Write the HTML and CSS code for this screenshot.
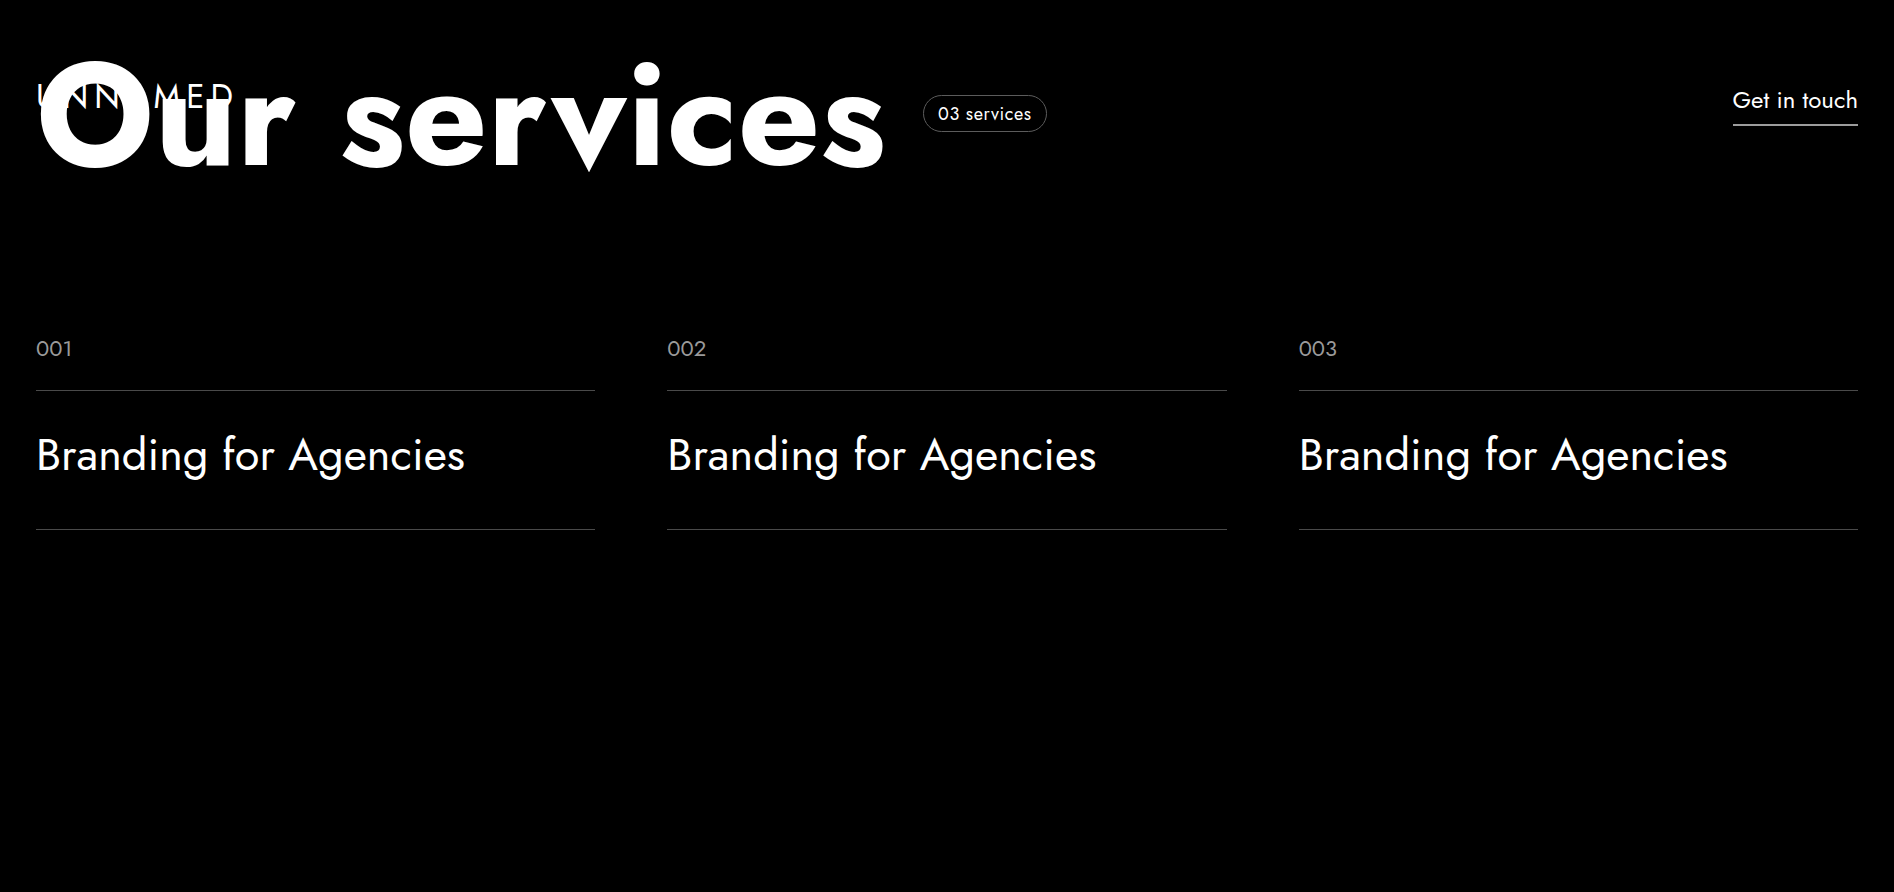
FILE: index.html
```html
<!DOCTYPE html>
<html lang="en">
<head>
<meta charset="utf-8">
<title>Our services</title>
<link rel="stylesheet" href="styles.css">
</head>
<body>
<header class="site-header">
  <a class="logo" href="#">UNNAMED</a>
  <a class="contact" href="#">Get in touch</a>
</header>
<main class="page">
  <section class="intro">
    <h1 class="title">Our services</h1>
    <span class="badge">03 services</span>
  </section>
  <section class="services">
    <article class="service">
      <div class="service-num">001</div>
      <h2 class="service-name">Branding for Agencies</h2>
    </article>
    <article class="service">
      <div class="service-num">002</div>
      <h2 class="service-name">Branding for Agencies</h2>
    </article>
    <article class="service">
      <div class="service-num">003</div>
      <h2 class="service-name">Branding for Agencies</h2>
    </article>
  </section>
</main>
</body>
</html>
```
FILE: styles.css
```css
* { box-sizing: border-box; }
html, body { margin: 0; padding: 0; }
body {
  background: #000;
  color: #fff;
  font-family: "Jost", "Lato", "Noto Sans", sans-serif;
  height: 892px;
  overflow: hidden;
}
a { color: inherit; text-decoration: none; }

.site-header {
  position: absolute;
  top: 80px;
  left: 36px;
  right: 36px;
  display: flex;
  justify-content: space-between;
  align-items: flex-start;
}
.logo {
  font-size: 33px;
  font-weight: 400;
  letter-spacing: 6px;
  line-height: 1;
}
.contact {
  font-size: 24px;
  font-weight: 400;
  line-height: 1;
  margin-top: 8px;
  padding-bottom: 12px;
  border-bottom: 2px solid #9c9c9c;
}

.page { padding: 0 36px; }

.intro {
  display: flex;
  align-items: flex-start;
  gap: 37px;
  padding-top: 43px;
}
.title {
  margin: 0;
  font-size: 144px;
  font-weight: 700;
  line-height: 144px;
  letter-spacing: 0;
}
.badge {
  margin-top: 52px;
  height: 37px;
  padding: 0 14px;
  display: inline-flex;
  align-items: center;
  border: 1px solid #5c5c5c;
  border-radius: 19px;
  font-size: 18px;
  letter-spacing: 0.6px;
}

.services {
  display: grid;
  grid-template-columns: repeat(3, 1fr);
  gap: 72px;
  margin-top: 150px;
}
.service-num {
  font-size: 22px;
  color: #9a9a9a;
  line-height: 1;
  padding-bottom: 31px;
  border-bottom: 1px solid #4a4a4a;
}
.service-name {
  margin: 0;
  font-size: 45px;
  font-weight: 400;
  line-height: 1;
  padding: 41px 0 52px;
  border-bottom: 1px solid #4a4a4a;
}
```
